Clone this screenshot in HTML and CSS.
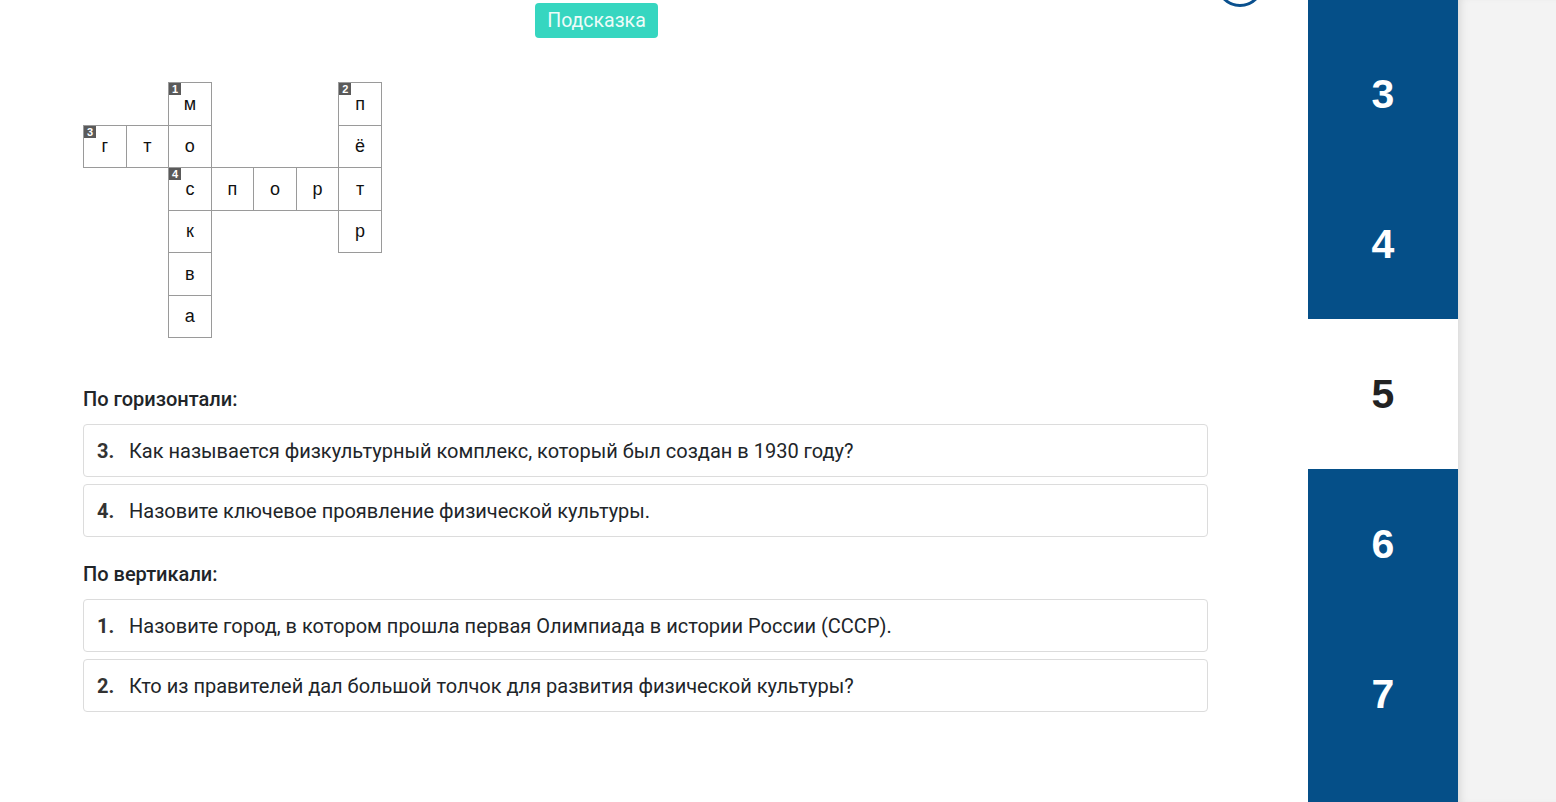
FILE: index.html
```html
<!DOCTYPE html>
<html lang="ru">
<head>
<meta charset="utf-8">
<title>Кроссворд</title>
<link rel="stylesheet" href="styles.css">
</head>
<body>
<div class="page">
  <main class="main">
    <div class="timer"></div>
    <div class="toprow">
      <button class="hint">Подсказка</button>
    </div>
    <div class="cw">
      <div class="cell" style="grid-row:1;grid-column:3"><span class="num">1</span>м</div>
      <div class="cell" style="grid-row:1;grid-column:7"><span class="num">2</span>п</div>
      <div class="cell" style="grid-row:2;grid-column:1"><span class="num">3</span>г</div>
      <div class="cell" style="grid-row:2;grid-column:2">т</div>
      <div class="cell" style="grid-row:2;grid-column:3">о</div>
      <div class="cell" style="grid-row:2;grid-column:7">ё</div>
      <div class="cell" style="grid-row:3;grid-column:3"><span class="num">4</span>с</div>
      <div class="cell" style="grid-row:3;grid-column:4">п</div>
      <div class="cell" style="grid-row:3;grid-column:5">о</div>
      <div class="cell" style="grid-row:3;grid-column:6">р</div>
      <div class="cell" style="grid-row:3;grid-column:7">т</div>
      <div class="cell" style="grid-row:4;grid-column:3">к</div>
      <div class="cell" style="grid-row:4;grid-column:7">р</div>
      <div class="cell" style="grid-row:5;grid-column:3">в</div>
      <div class="cell" style="grid-row:6;grid-column:3">а</div>
    </div>
    <h3 class="heading first">По горизонтали:</h3>
    <div class="clues">
      <div class="clue"><b>3.</b><span>Как называется физкультурный комплекс, который был создан в 1930 году?</span></div>
      <div class="clue"><b>4.</b><span>Назовите ключевое проявление физической культуры.</span></div>
    </div>
    <h3 class="heading">По вертикали:</h3>
    <div class="clues">
      <div class="clue"><b>1.</b><span>Назовите город, в котором прошла первая Олимпиада в истории России (СССР).</span></div>
      <div class="clue"><b>2.</b><span>Кто из правителей дал большой толчок для развития физической культуры?</span></div>
    </div>
  </main>
  <nav class="side">
    <div class="list">
      <div class="item">3</div>
      <div class="item">4</div>
      <div class="item active">5</div>
      <div class="item">6</div>
      <div class="item">7</div>
    </div>
  </nav>
  <div class="rest"></div>
</div>
</body>
</html>
```

FILE: styles.css
```css
html, body {
  margin: 0;
  padding: 0;
  height: 100%;
  overflow: hidden;
}
body {
  font-family: Roboto, "Liberation Sans", sans-serif;
  color: #212529;
  background: #fff;
}
.page {
  display: flex;
  height: 802px;
}
.main {
  position: relative;
  width: 1308px;
  flex: none;
  box-sizing: border-box;
  padding: 0 100px 0 83px;
}
.timer {
  position: absolute;
  left: 1216px;
  top: -41px;
  width: 42px;
  height: 42px;
  border: 3px solid #0a508e;
  border-radius: 50%;
}
.toprow {
  display: flex;
  padding-top: 3px;
  height: 35px;
}
.hint {
  margin-left: 452px;
  height: 35px;
  width: 123px;
  padding: 0;
  border: none;
  border-radius: 4px;
  background: #36d6c0;
  color: #eefcf9;
  font-family: Roboto, sans-serif;
  font-size: 19.5px;
  font-weight: 400;
}
.cw {
  margin-top: 44px;
  display: grid;
  grid-template-columns: repeat(7, 42.57px);
  grid-template-rows: repeat(6, 42.5px);
  width: 300px;
  height: 256px;
}
.cell {
  position: relative;
  box-sizing: border-box;
  width: 43.5px;
  height: 43.5px;
  border: 1px solid #9a9a9a;
  display: flex;
  align-items: center;
  justify-content: center;
  font-family: "Liberation Sans", Arial, sans-serif;
  font-size: 18px;
  color: #111;
  padding-top: 1px;
}
.num {
  position: absolute;
  left: 0;
  top: 0;
  width: 12px;
  height: 12px;
  background: #5a5a5a;
  color: #fff;
  font-family: "Liberation Sans", Arial, sans-serif;
  font-size: 11px;
  font-weight: 700;
  line-height: 12px;
  text-align: center;
}
.heading {
  margin: 25px 0 13px;
  font-size: 20px;
  line-height: 24px;
  font-weight: 500;
  color: #212529;
}
.heading.first {
  margin-top: 49px;
}
.clues {
  display: flex;
  flex-direction: column;
  gap: 7px;
}
.clue {
  box-sizing: border-box;
  height: 53px;
  border: 1px solid #dcdcdc;
  border-radius: 4px;
  display: flex;
  align-items: center;
  padding: 0 13px;
  font-size: 20px;
  color: #212529;
}
.clue b {
  width: 32px;
  font-weight: 700;
  color: #333;
}
.side {
  width: 150px;
  flex: none;
  background: #054f88;
  overflow: hidden;
}
.list {
  margin-top: 19px;
  display: flex;
  flex-direction: column;
}
.item {
  height: 150px;
  display: flex;
  align-items: center;
  justify-content: center;
  font-family: "Liberation Sans", Arial, sans-serif;
  font-size: 41px;
  font-weight: 700;
  color: #fff;
}
.item.active {
  background: #fff;
  color: #222;
}
.rest {
  flex: 1;
  background: #f3f3f3;
  box-shadow: inset 7px 0 8px -5px rgba(0, 0, 0, 0.12);
}
```
